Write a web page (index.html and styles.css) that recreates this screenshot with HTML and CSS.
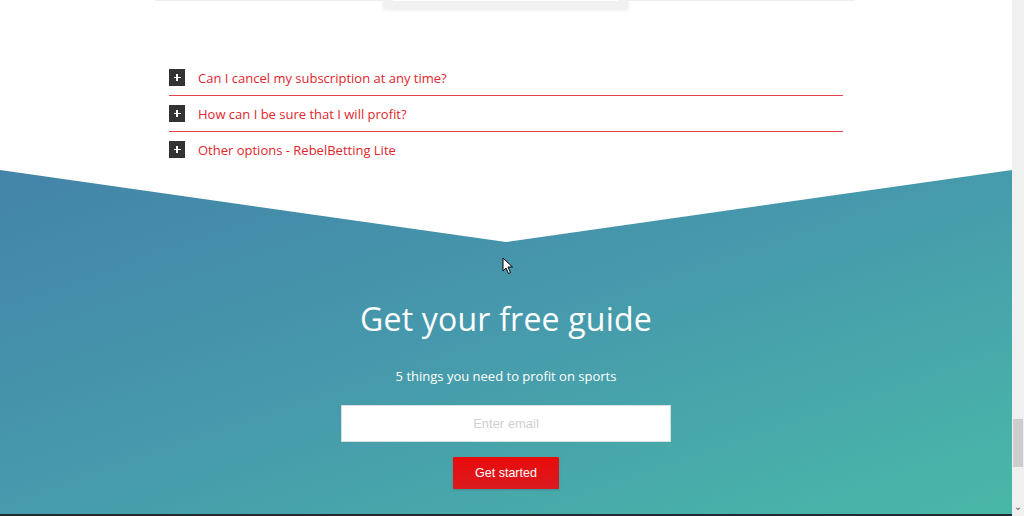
FILE: index.html
```html
<!DOCTYPE html>
<html>
<head>
<meta charset="utf-8">
<link rel="stylesheet" href="styles.css">
</head>
<body>
<div class="screen">
  <div class="page">
    <div class="top">
      <div class="topline"></div>
      <div class="topbox"><div class="topbox-inner"></div></div>
    </div>
    <div class="faq">
      <div class="faq-row"><span class="plus"></span><span class="q">Can I cancel my subscription at any time?</span></div>
      <div class="sep"></div>
      <div class="faq-row"><span class="plus"></span><span class="q">How can I be sure that I will profit?</span></div>
      <div class="sep"></div>
      <div class="faq-row"><span class="plus"></span><span class="q">Other options - RebelBetting Lite</span></div>
    </div>
    <div class="guide">
      <h2 class="guide-title">Get your free guide</h2>
      <p class="guide-sub">5 things you need to profit on sports</p>
      <input class="email" type="text" placeholder="Enter email">
      <button class="btn">Get started</button>
      <svg class="cursor" width="12" height="18" viewBox="0 0 12 18"><path d="M1 1 L1 14 L4 11 L6.5 16.5 L8.5 15.5 L6 10 L10.5 10 Z" fill="#fff" stroke="#000" stroke-width="1"/></svg>
    </div>
    <div class="taskbar"></div>
  </div>
  <div class="scrollbar">
    <div class="thumb"></div>
    <div class="arrow">&#8964;</div>
  </div>
</div>
</body>
</html>
```
FILE: styles.css
```css
html, body {
  margin: 0;
  padding: 0;
  background: #fff;
  overflow: hidden;
}
.screen {
  display: flex;
  width: 1024px;
  height: 516px;
}
.page {
  width: 1012px;
  display: flex;
  flex-direction: column;
  font-family: "Open Sans", "Noto Sans", sans-serif;
}
.top {
  position: relative;
  height: 60px;
}
.topline {
  margin-left: 155px;
  width: 700px;
  height: 1px;
  background: #eeeeee;
}
.topbox {
  position: absolute;
  left: 383px;
  top: 0;
  width: 245px;
  height: 8px;
  background: #f1f1f1;
  box-shadow: 0 2px 4px rgba(0,0,0,0.08);
}
.topbox-inner {
  margin: 0 10px;
  height: 1px;
  background: #fff;
}
.faq {
  margin-left: 169px;
  width: 674px;
  height: 110px;
}
.faq-row {
  display: flex;
  align-items: center;
  gap: 13px;
  height: 35px;
}
.sep {
  height: 1px;
  background: #e8434a;
}
.plus {
  position: relative;
  width: 16px;
  height: 17px;
  background: #333333;
}
.plus::before,
.plus::after {
  content: "";
  position: absolute;
  background: #fff;
}
.plus::before {
  left: 4.5px;
  top: 7.5px;
  width: 7px;
  height: 1.6px;
}
.plus::after {
  left: 7.2px;
  top: 4.8px;
  width: 1.6px;
  height: 7px;
}
.q {
  color: #e0262e;
  font-size: 13px;
  line-height: 20px;
}
.guide {
  position: relative;
  height: 344px;
  background: linear-gradient(to bottom right, #4384a9 0%, #4698ac 45%, #49b8a8 100%);
  clip-path: polygon(0 0, 50% 72px, 100% 0, 100% 100%, 0 100%);
  display: flex;
  flex-direction: column;
  align-items: center;
  padding-top: 127px;
  box-sizing: border-box;
}
.guide-title {
  margin: 0;
  color: #fff;
  font-weight: 400;
  font-size: 32px;
  line-height: 44px;
  letter-spacing: 0.2px;
}
.guide-sub {
  margin: 25px 0 0;
  color: #fff;
  font-size: 13px;
  line-height: 20px;
}
.email {
  margin-top: 19px;
  width: 330px;
  height: 37px;
  box-sizing: border-box;
  border: 1px solid #d6dede;
  background: #fff;
  text-align: center;
  font-family: "Liberation Sans", Arial, sans-serif;
  font-size: 13px;
  outline: none;
}
.email::placeholder {
  color: #cfcfcf;
}
.btn {
  margin-top: 15px;
  width: 106px;
  height: 32px;
  border: none;
  border-radius: 1px;
  background: linear-gradient(to bottom, #ea0a0a, #d91b20);
  color: #fff;
  font-family: "Liberation Sans", Arial, sans-serif;
  font-size: 12.5px;
  box-shadow: 0 1px 2px rgba(0,0,0,0.15);
}
.cursor {
  position: absolute;
  left: 502px;
  top: 87px;
}
.taskbar {
  height: 2px;
  background: #1f2b2e;
}
.scrollbar {
  position: relative;
  width: 12px;
  height: 516px;
  background: #f0f0f0;
}
.thumb {
  position: absolute;
  left: 1px;
  top: 419px;
  width: 10px;
  height: 48px;
  background: #cdcdcd;
}
.arrow {
  position: absolute;
  left: 0;
  bottom: 4px;
  width: 12px;
  text-align: center;
  font-size: 10px;
  line-height: 10px;
  color: #606060;
  font-family: "DejaVu Sans", sans-serif;
}
```
